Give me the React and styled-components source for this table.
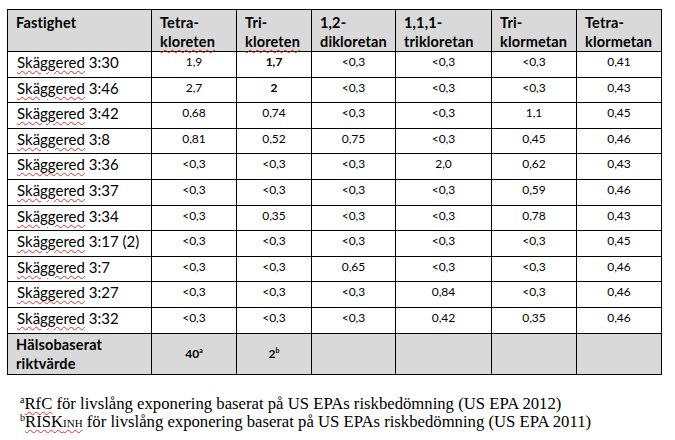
import styled, { createGlobalStyle } from "styled-components";

const GlobalStyle = createGlobalStyle`
  html, body {
    margin: 0;
    padding: 0;
    background: #ffffff;
  }
`;

const columns = [
  { label: ["Fastighet"], width: 144 },
  { label: ["Tetra-", "kloreten"], width: 85, wavy: true },
  { label: ["Tri-", "kloreten"], width: 75, wavy: true },
  { label: ["1,2-", "dikloretan"], width: 84 },
  { label: ["1,1,1-", "trikloretan"], width: 96 },
  { label: ["Tri-", "klormetan"], width: 85 },
  { label: ["Tetra-", "klormetan"], width: 85 },
];

const rows = [
  ["3:30", "1,9", "*1,7", "<0,3", "<0,3", "<0,3", "0,41"],
  ["3:46", "2,7", "*2", "<0,3", "<0,3", "<0,3", "0,43"],
  ["3:42", "0,68", "0,74", "<0,3", "<0,3", "1,1", "0,45"],
  ["3:8", "0,81", "0,52", "0,75", "<0,3", "0,45", "0,46"],
  ["3:36", "<0,3", "<0,3", "<0,3", "2,0", "0,62", "0,43"],
  ["3:37", "<0,3", "<0,3", "<0,3", "<0,3", "0,59", "0,46"],
  ["3:34", "<0,3", "0,35", "<0,3", "<0,3", "0,78", "0,43"],
  ["3:17 (2)", "<0,3", "<0,3", "<0,3", "<0,3", "<0,3", "0,45"],
  ["3:7", "<0,3", "<0,3", "0,65", "<0,3", "<0,3", "0,46"],
  ["3:27", "<0,3", "<0,3", "<0,3", "0,84", "<0,3", "0,46"],
  ["3:32", "<0,3", "<0,3", "<0,3", "0,42", "0,35", "0,46"],
];

const Page = styled.div`
  width: 675px;
  height: 440px;
  padding: 9px 0 0 7px;
  box-sizing: border-box;
  overflow: hidden;
`;

const Table = styled.table`
  border-collapse: collapse;
  table-layout: fixed;
  width: 655px;
  font-family: Lato, "Open Sans", sans-serif;
  color: #000;
`;

const HeadCell = styled.th`
  background: #d9d9d9;
  border: 1px solid #000;
  height: 40px;
  padding: 3px 0 0 8px;
  box-sizing: border-box;
  text-align: left;
  vertical-align: top;
  font-size: 14.5px;
  font-weight: 700;
  line-height: 19px;
  letter-spacing: 0.15px;
`;

const Wavy = styled.span`
  text-decoration: ${(p) => (p.$on ? "underline wavy #e03030" : "none")};
  text-decoration-thickness: 1px;
  text-underline-offset: 2px;
`;

const NameCell = styled.td`
  border: 1px solid #000;
  height: 25.6px;
  padding: 0 0 0 9px;
  box-sizing: border-box;
  vertical-align: top;
  font-size: 15px;
  line-height: 20px;
  white-space: nowrap;
`;

const Cell = styled.td`
  border: 1px solid #000;
  padding: 2px 0 0 0;
  box-sizing: border-box;
  vertical-align: top;
  text-align: center;
  font-size: 12px;
  line-height: 16px;
  font-weight: ${(p) => (p.$bold ? 700 : 400)};
`;

const FootRow = styled.tr`
  background: #d9d9d9;
`;

const FootLabel = styled.td`
  border: 1px solid #000;
  height: 41px;
  padding: 1px 0 0 8px;
  box-sizing: border-box;
  vertical-align: top;
  font-size: 14.5px;
  font-weight: 700;
  line-height: 19px;
  letter-spacing: 0.15px;
`;

const FootValue = styled.td`
  border: 1px solid #000;
  text-align: center;
  vertical-align: middle;
  font-size: 12px;
  font-weight: 700;
`;

const Sup = styled.sup`
  font-size: 7px;
  vertical-align: 5px;
  line-height: 0;
`;

const Notes = styled.div`
  margin: 20px 0 0 13px;
  font-family: "Liberation Serif", "Times New Roman", serif;
  font-size: 16.7px;
  line-height: 18px;
  color: #000;
`;

const NoteLine = styled.div`
  white-space: nowrap;
`;

const NoteSup = styled.span`
  font-size: 10px;
  vertical-align: 6px;
  line-height: 0;
`;

const Sub = styled.span`
  font-size: 11px;
`;

export default function App() {
  return (
    <Page>
      <GlobalStyle />
      <Table>
        <colgroup>
          {columns.map((c, i) => (
            <col key={i} style={{ width: c.width }} />
          ))}
        </colgroup>
        <thead>
          <tr>
            {columns.map((c, i) => (
              <HeadCell key={i}>
                {c.label.map((l, j) => (
                  <div key={j}>
                    <Wavy $on={c.wavy && j === 1}>{l}</Wavy>
                  </div>
                ))}
              </HeadCell>
            ))}
          </tr>
        </thead>
        <tbody>
          {rows.map((r, i) => (
            <tr key={i}>
              <NameCell>
                <Wavy $on>Skäggered</Wavy> {r[0]}
              </NameCell>
              {r.slice(1).map((v, j) => {
                const bold = v.startsWith("*");
                return (
                  <Cell key={j} $bold={bold}>
                    {bold ? v.slice(1) : v}
                  </Cell>
                );
              })}
            </tr>
          ))}
          <FootRow>
            <FootLabel>
              Hälsobaserat
              <br />
              riktvärde
            </FootLabel>
            <FootValue>
              40<Sup>a</Sup>
            </FootValue>
            <FootValue>
              2<Sup>b</Sup>
            </FootValue>
            <FootValue />
            <FootValue />
            <FootValue />
            <FootValue />
          </FootRow>
        </tbody>
      </Table>
      <Notes>
        <NoteLine>
          <NoteSup>a</NoteSup>
          <Wavy $on>RfC</Wavy> för livslång exponering baserat på US EPAs
          riskbedömning (US EPA 2012)
        </NoteLine>
        <NoteLine>
          <NoteSup>b</NoteSup>
          <Wavy $on>
            RISK<Sub>INH</Sub>
          </Wavy>{" "}
          för livslång exponering baserat på US EPAs riskbedömning (US EPA
          2011)
        </NoteLine>
      </Notes>
    </Page>
  );
}
